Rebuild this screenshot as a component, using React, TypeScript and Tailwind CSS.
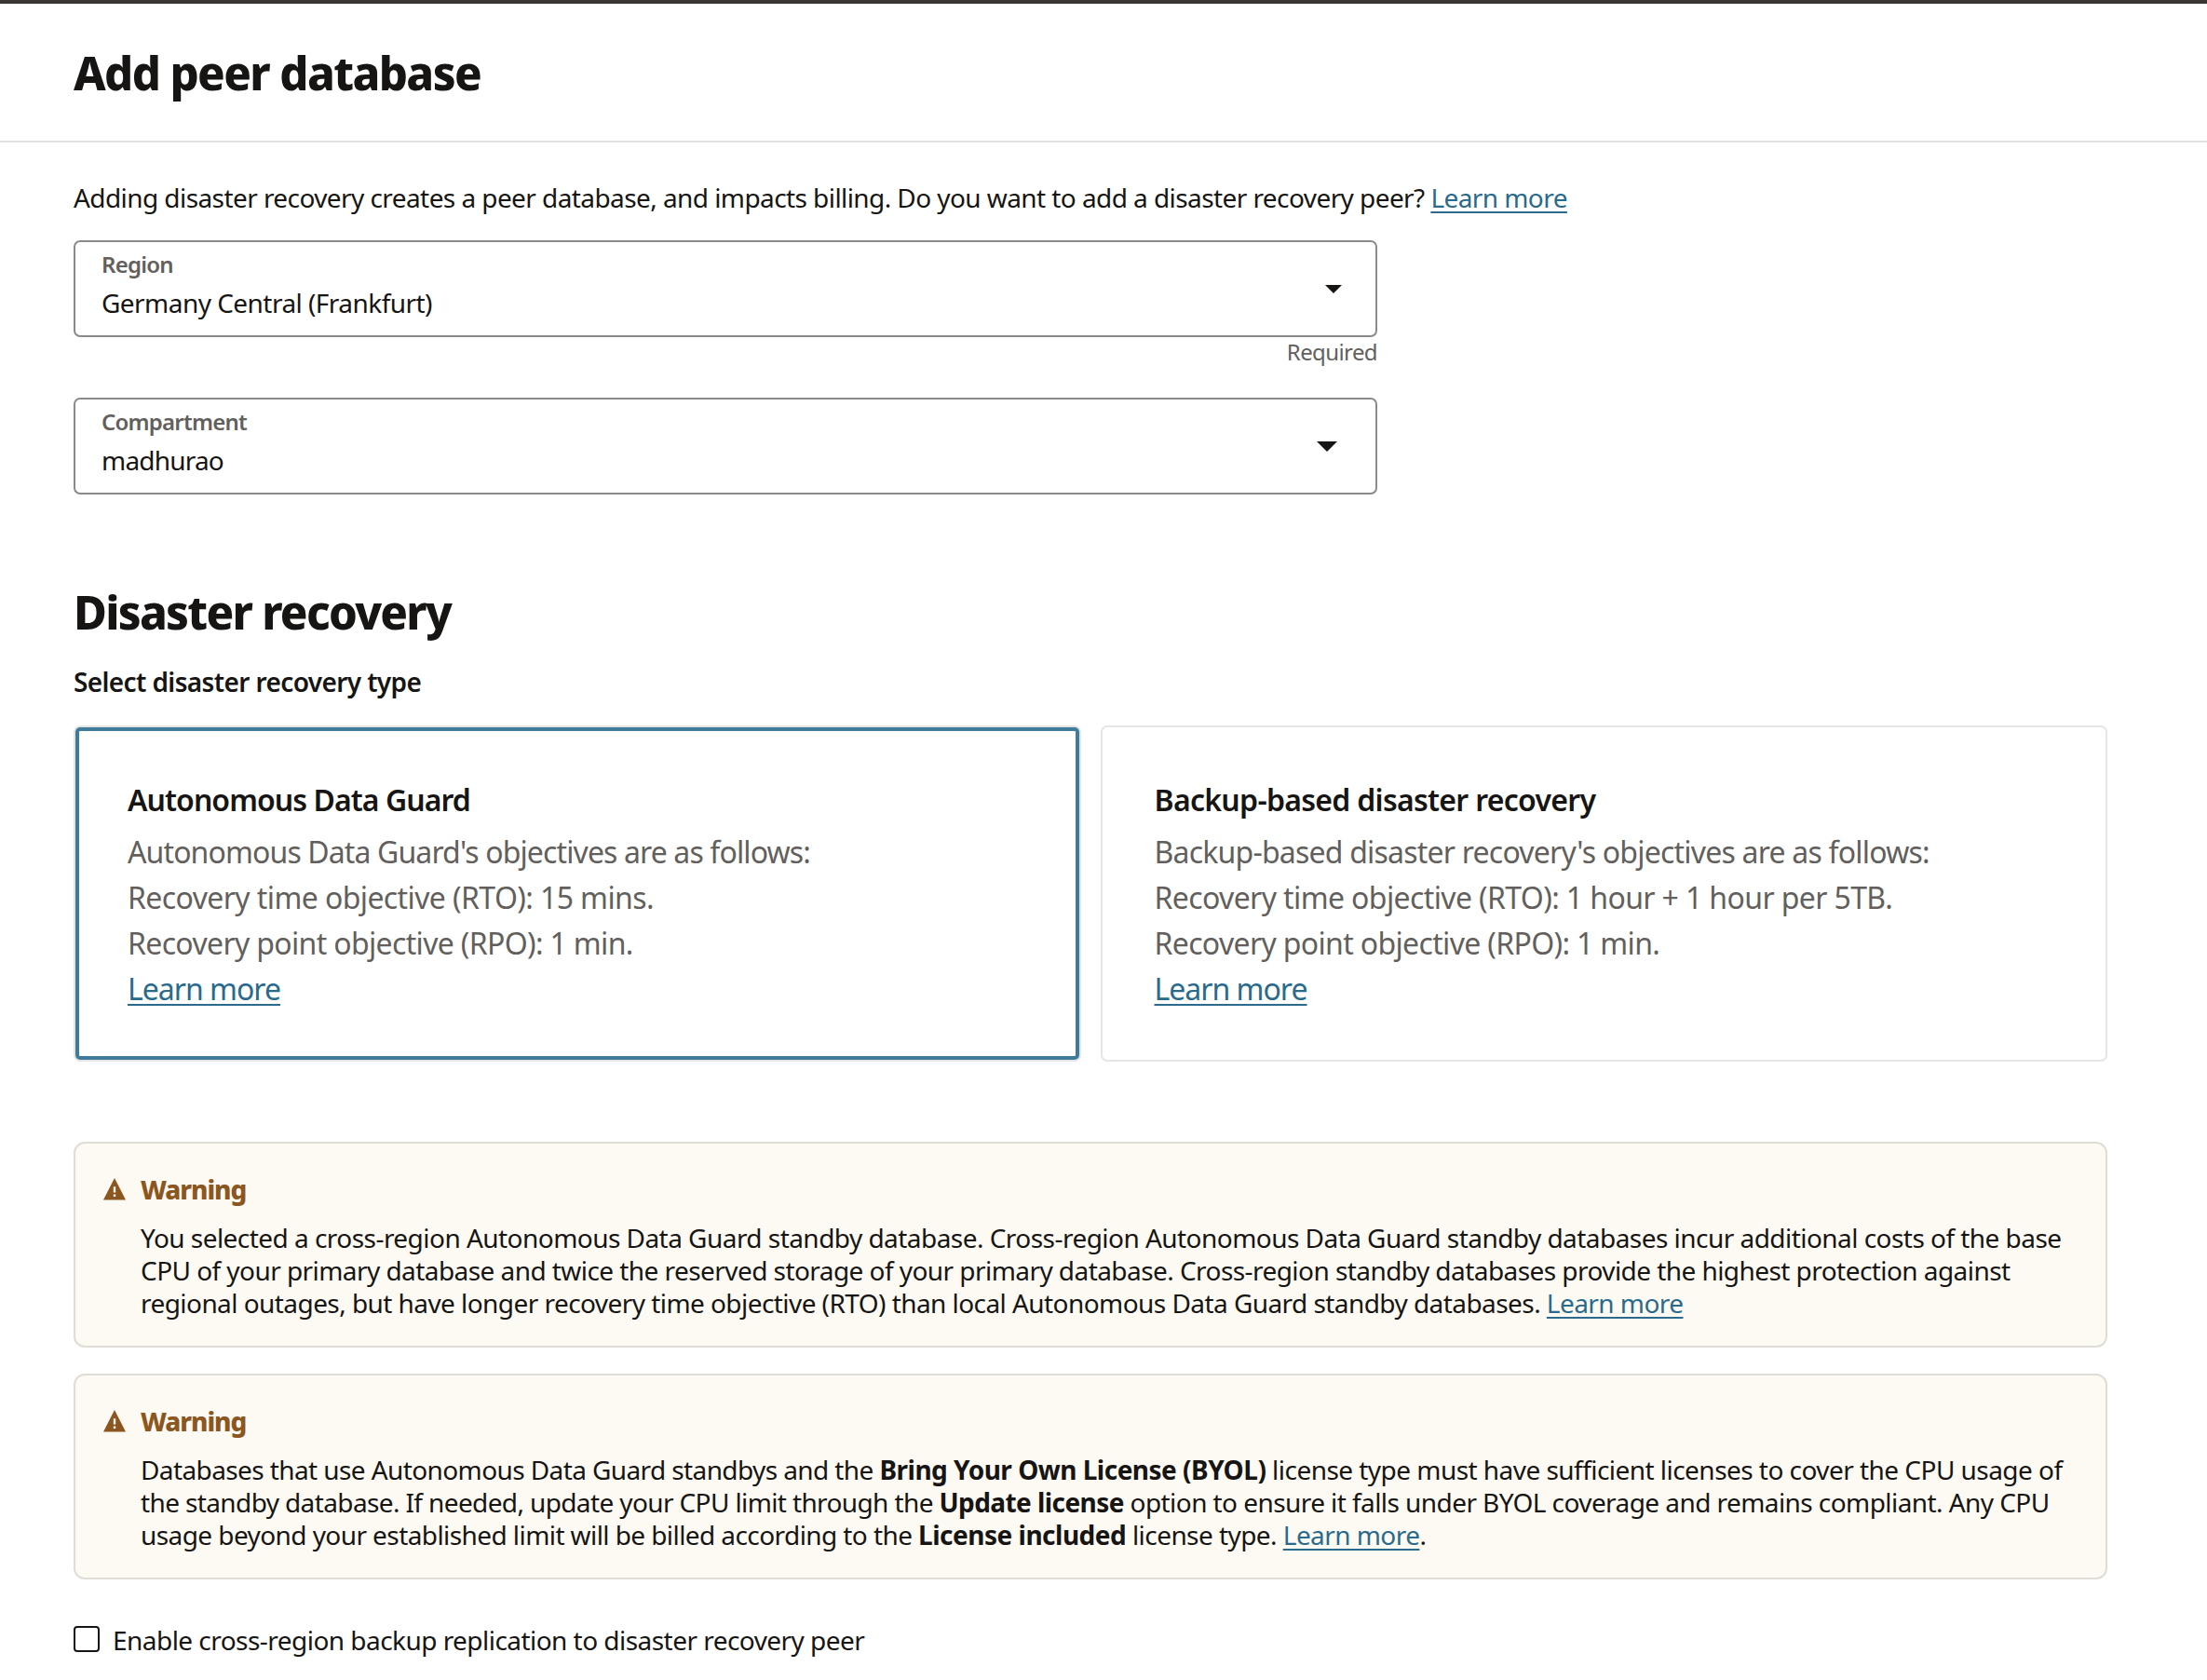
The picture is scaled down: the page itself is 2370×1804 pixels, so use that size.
import React from 'react';

function LearnMore({ className = '' }: { className?: string }) {
  return (
    <a
      href="#"
      className={`text-[#2a6a8c] underline decoration-2 underline-offset-4 [text-decoration-skip-ink:none] ${className}`}
    >
      Learn more
    </a>
  );
}

function SelectField({ label, value, caret }: { label: string; value: React.ReactNode; caret: React.ReactNode }) {
  return (
    <div className="relative h-[104px] w-[1400px] rounded-[7px] border-2 border-[#8b8a89] bg-white pl-[28px] pt-[8px]">
      <div className="text-[24px] font-semibold leading-8 tracking-[-0.77px] text-[#625f5d]">{label}</div>
      <div className="mt-[7px] text-[28px] leading-9">{value}</div>
      {caret}
    </div>
  );
}

function WarningIcon() {
  return (
    <svg width="24" height="24" viewBox="0 0 24 24" className="mt-[6px] shrink-0" fill="#8b5620">
      <path fillRule="evenodd" d="M12 0 24 23.5H0ZM10.8 9.2V15.6H13.2V9.2ZM10.8 17.4V20H13.2V17.4Z" />
    </svg>
  );
}

function Warning({ children }: { children: React.ReactNode }) {
  return (
    <div className="flex h-[221px] w-[2184px] rounded-[12px] border-2 border-[#e0ddd6] bg-[#fdfaf3] pl-[30px] pt-[31px]">
      <WarningIcon />
      <div className="ml-[16px]">
        <div className="text-[28px] font-extrabold leading-9 tracking-[-1.08px] text-[#8b5620]">Warning</div>
        <div className="mt-[17px] whitespace-nowrap text-[28px] leading-[35px]">{children}</div>
      </div>
    </div>
  );
}

export default function App() {
  return (
    <div className="h-[1804px] w-[2370px] overflow-hidden bg-white font-['Noto_Sans',sans-serif] text-[#161513]">
      <header className="h-[153px] border-b-2 border-t-4 border-b-[#e3e2e1] border-t-[#393533] pl-[79px] pt-[44px]">
        <h1 className="text-[49px] font-extrabold leading-[60px] tracking-[-1.6px]">Add peer database</h1>
      </header>

      <main className="pl-[79px] pt-[41px]">
        <p className="whitespace-nowrap text-[28px] leading-9 tracking-[-0.575px]">
          Adding disaster recovery creates a peer database, and impacts billing. Do you want to add a disaster recovery
          peer? <LearnMore />
        </p>

        <div className="mt-[28px]">
          <SelectField
            label="Region"
            value={<span className="tracking-[-0.54px]">Germany Central (Frankfurt)</span>}
            caret={
              <svg width="18" height="9" viewBox="0 0 18 9" className="absolute right-[36px] top-[46px]" fill="#161513">
                <path d="M0 0H18L9 9Z" />
              </svg>
            }
          />
          <div className="w-[1400px] text-right text-[24px] leading-8 tracking-[-0.6px] text-[#625f5d]">Required</div>
        </div>

        <div className="mt-[33px]">
          <SelectField
            label="Compartment"
            value={<span className="tracking-[-0.8px]">madhurao</span>}
            caret={
              <svg width="22" height="11" viewBox="0 0 22 11" className="absolute right-[41px] top-[45px]" fill="#161513">
                <path d="M0 0H22L11 11Z" />
              </svg>
            }
          />
        </div>

        <h2 className="mt-[96px] text-[49px] font-extrabold leading-[60px] tracking-[-1.72px]">Disaster recovery</h2>
        <p className="mt-[27px] text-[28px] font-semibold leading-9 tracking-[-0.62px]">Select disaster recovery type</p>

        <div className="mt-[29px] grid h-[361px] w-[2184px] grid-cols-2 gap-[21px] text-[32px] leading-[49px] text-[#625f5d]">
          <div className="rounded-[7px] border-2 border-[#e6e5e4]">
            <div className="h-full rounded-[5px] border-4 border-[#3f7c9b] pl-[52px] pt-[54px]">
              <h3 className="text-[32px] font-semibold leading-10 tracking-[-0.94px] text-[#161513]">
                Autonomous Data Guard
              </h3>
              <div className="mt-[11px] tracking-[-0.88px]">Autonomous Data Guard's objectives are as follows:</div>
              <div className="tracking-[-0.6px]">Recovery time objective (RTO): 15 mins.</div>
              <div className="tracking-[-0.66px]">Recovery point objective (RPO): 1 min.</div>
              <div className="tracking-[-1px]">
                <LearnMore />
              </div>
            </div>
          </div>
          <div className="rounded-[7px] border-2 border-[#e6e5e4] pl-[56px] pt-[58px]">
            <h3 className="text-[32px] font-semibold leading-10 tracking-[-0.71px] text-[#161513]">
              Backup-based disaster recovery
            </h3>
            <div className="mt-[11px] tracking-[-0.79px]">Backup-based disaster recovery's objectives are as follows:</div>
            <div className="tracking-[-0.62px]">Recovery time objective (RTO): 1 hour + 1 hour per 5TB.</div>
            <div className="tracking-[-0.66px]">Recovery point objective (RPO): 1 min.</div>
            <div className="tracking-[-1px]">
              <LearnMore />
            </div>
          </div>
        </div>

        <div className="mt-[86px] flex flex-col gap-7">
          <Warning>
            <div className="tracking-[-0.54px]">
              You selected a cross-region Autonomous Data Guard standby database. Cross-region Autonomous Data Guard
              standby databases incur additional costs of the base
            </div>
            <div className="tracking-[-0.56px]">
              CPU of your primary database and twice the reserved storage of your primary database. Cross-region standby
              databases provide the highest protection against
            </div>
            <div className="tracking-[-0.56px]">
              regional outages, but have longer recovery time objective (RTO) than local Autonomous Data Guard standby
              databases. <LearnMore />
            </div>
          </Warning>
          <Warning>
            <div className="tracking-[-0.54px]">
              <span className="tracking-[-0.6px]">
                Databases that use Autonomous Data Guard standbys and the{' '}
              </span>
              <b className="tracking-[-0.51px]">Bring Your Own License (BYOL)</b> license type must have sufficient
              licenses to cover the CPU usage of
            </div>
            <div className="tracking-[-0.57px]">
              <span className="tracking-[-0.62px]">
                the standby database. If needed, update your CPU limit through the{' '}
              </span>
              <b>Update license</b> option to ensure it falls under BYOL coverage and remains compliant. Any CPU
            </div>
            <div className="tracking-[-0.56px]">
              <span className="tracking-[-0.58px]">
                usage beyond your established limit will be billed according to the{' '}
              </span>
              <b className="tracking-[-0.5px]">License included</b> license type. <LearnMore />.
            </div>
          </Warning>
        </div>

        <label className="mt-[47px] flex items-start">
          <span className="mt-[3px] h-7 w-7 rounded-[4px] border-[2.5px] border-[#161513]" />
          <span className="ml-[14px] text-[28px] leading-9 tracking-[-0.54px]">
            Enable cross-region backup replication to disaster recovery peer
          </span>
        </label>
      </main>
    </div>
  );
}
